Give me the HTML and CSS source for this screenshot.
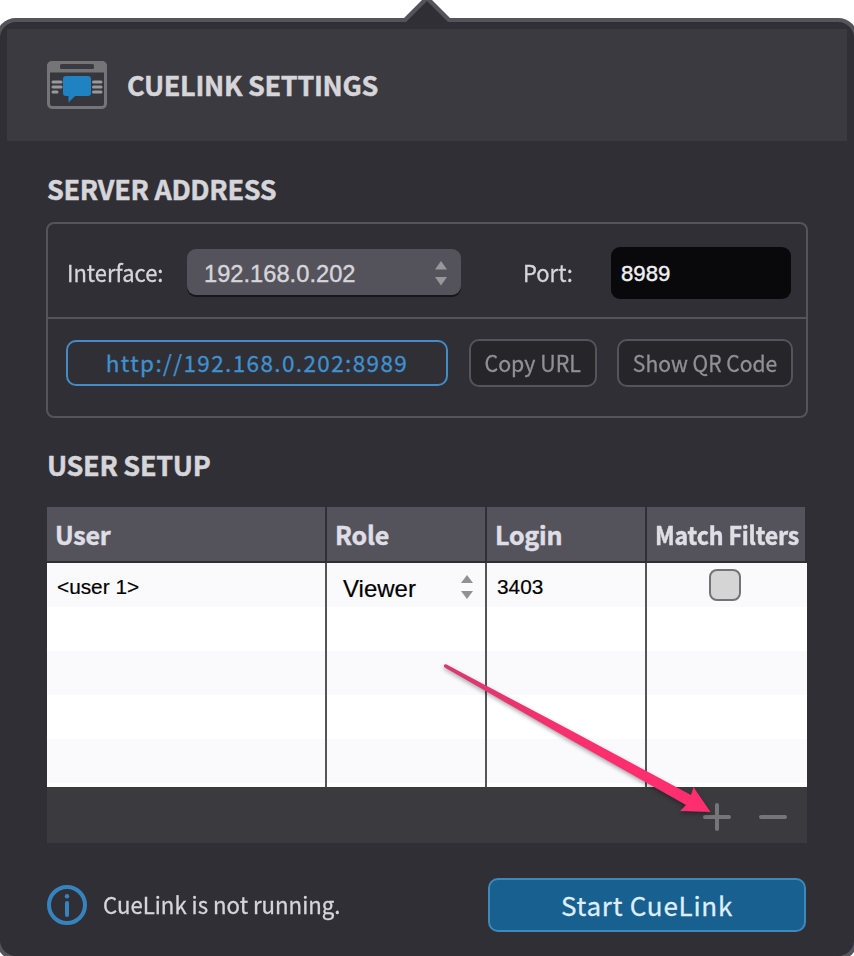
FILE: index.html
```html
<!DOCTYPE html>
<html lang="en">
<head>
<meta charset="utf-8">
<title>CueLink Settings</title>
<link rel="stylesheet" href="styles.css">
</head>
<body>
<main class="popover">
  <svg class="beak" width="50" height="24" viewBox="0 0 50 24"><path d="M2 18 25-5 48 18V22H2Z" fill="#55545c"/><path d="M3.500 22.500 25 1 46.500 22.500V24H3.500Z" fill="#302f35"/></svg>
  <header class="header">
    <svg class="logo" width="60" height="48" viewBox="0 0 60 48">
      <rect x="1.500" y="1.500" width="57" height="45" rx="4" fill="#37363c" stroke="#757477" stroke-width="3"/>
      <path d="M0 11.500V5a5 5 0 0 1 5-5H55a5 5 0 0 1 5 5V11.500Z" fill="#757477"/>
      <rect x="13" y="3" width="34" height="5" rx="1.500" fill="#3b3a40"/>
      <path d="M6 21H14M6 26H14M6 31H10M46.500 21H54M46.500 26H54M46.500 31H54" stroke="#99989b" stroke-width="3" stroke-linecap="round"/>
      <path d="M19 15H41a3 3 0 0 1 3 3V32a3 3 0 0 1-3 3H28L21.500 41.500V35H19a3 3 0 0 1-3-3V18a3 3 0 0 1 3-3Z" fill="#1f83c3"/>
    </svg>
    <h1>CUELINK SETTINGS</h1>
  </header>
  <section class="server">
    <h2>SERVER ADDRESS</h2>
    <div class="panel">
      <div class="row row-top">
        <span class="label interface">Interface:</span>
        <div class="select"><span>192.168.0.202</span><svg width="12" height="25" viewBox="0 0 12 25"><path d="M0 8.500 6 0 12 8.500ZM0 16 6 24.500 12 16Z" fill="#98979a"/></svg></div>
        <span class="label port">Port:</span>
        <div class="input">8989</div>
      </div>
      <div class="row row-bottom">
        <div class="url"><span>http://192.168.0.202:8989</span></div>
        <div class="button copy"><span>Copy URL</span></div>
        <div class="button qr"><span>Show QR Code</span></div>
      </div>
    </div>
  </section>
  <section class="users">
    <h2>USER SETUP</h2>
    <div class="table">
      <div class="cells head"><div>User</div><div>Role</div><div>Login</div><div class="match"><span>Match Filters</span></div></div>
      <div class="cells body">
        <div class="name">&lt;user 1&gt;</div>
        <div class="role"><span>Viewer</span><svg width="12" height="25" viewBox="0 0 12 25"><path d="M0 8 6 0 12 8ZM0 16 6 24 12 16Z" fill="#919093"/></svg></div>
        <div class="login">3403</div>
        <div class="check"><span class="box"></span></div>
      </div>
      <div class="foot">
        <svg width="28" height="28" viewBox="0 0 28 28"><path d="M2 14H26M14 2V26" stroke="#767578" stroke-width="4" stroke-linecap="round"/></svg>
        <svg width="28" height="28" viewBox="0 0 28 28"><path d="M2 14H26" stroke="#767578" stroke-width="4" stroke-linecap="round"/></svg>
      </div>
    </div>
  </section>
  <footer class="footer">
    <svg width="40" height="40" viewBox="0 0 40 40"><circle cx="20" cy="20" r="18" fill="none" stroke="#3584bf" stroke-width="4"/><circle cx="20" cy="11.200" r="2.200" fill="#3584bf"/><path d="M20 18V30" stroke="#3584bf" stroke-width="4" stroke-linecap="round"/></svg>
    <span class="status">CueLink is not running.</span>
    <div class="start"><span>Start CueLink</span></div>
  </footer>
</main>
<svg class="pointer" width="284" height="164" viewBox="440 656 284 164">
  <defs><linearGradient id="shaft" x1="0" x2="1" y1="0" y2="0"><stop offset="0" stop-color="#d63a6d"/><stop offset=".4" stop-color="#f4316e"/><stop offset=".7" stop-color="#ff2e6e"/></linearGradient></defs>
  <path d="M444.500 664.500C443.300 666 444 667.300 445.500 668L570 739.500 686 805 680 811 710.500 812 693.500 787 691 795 570 730 446.500 664.500Q445.500 664 444.500 664.500Z" fill="url(#shaft)"/>
</svg>
</body>
</html>
```

FILE: styles.css
```css
* { box-sizing: border-box; }
body {
  margin: 0;
  width: 854px;
  height: 956px;
  overflow: hidden;
  position: relative;
  display: flow-root;
  background: #fff;
  font-family: "Noto Sans CJK SC", "Noto Sans", sans-serif;
  color: #d6d5da;
}
svg { display: block; flex: none; overflow: visible; }
h1, h2 {
  margin: 0;
  font-size: 27px;
  line-height: 40px;
  font-weight: 700;
  letter-spacing: -0.3px;
  white-space: nowrap;
  -webkit-text-stroke: 0.5px;
}
.popover {
  position: relative;
  width: 862px;
  height: 942px;
  margin: 18px 0 0 -4px;
  padding: 7px;
  border: 4px solid #55545c;
  border-radius: 20px;
  background: #302f35;
}
.beak { position: absolute; left: 402px; top: -22px; }
.header {
  height: 112px;
  padding: 0 40px;
  display: flex;
  align-items: center;
  gap: 20px;
  background: #3b3a40;
}
.server, .users, .footer { margin-left: 40px; }
.server { padding-top: 28px; margin-left: 39px; }
.server h2 { padding-left: 1px; }
.panel {
  width: 762px;
  height: 196px;
  margin-top: 13px;
  border: 2px solid #55545c;
  border-radius: 8px;
}
.row { display: flex; align-items: center; }
.row-top { height: 95px; padding: 5px 15px 0 19px; border-bottom: 2px solid #55545c; }
.row-bottom { height: 88px; padding-left: 18px; }
.label {
  padding-bottom: 3px;
  font-size: 23px;
  line-height: 36px;
  white-space: nowrap;
  transform: scaleX(0.955);
  transform-origin: left;
  -webkit-text-stroke: 0.3px;
}
.interface { width: 120px; }
.port { width: 88px; margin-left: 62px; }
.select {
  width: 274px;
  height: 46px;
  margin-top: -2px;
  padding: 4px 14px 0 17px;
  display: flex;
  align-items: center;
  justify-content: space-between;
  border-radius: 9px;
  background: #54535c;
  box-shadow: 0 2px 0 #17161b;
  font: 23.7px/36px "Liberation Sans", Arial, sans-serif;
  -webkit-text-stroke: 0.4px;
}
.select svg { margin-top: -2px; }
.input {
  width: 180px;
  height: 52px;
  padding: 2px 10px 0;
  border-radius: 9px;
  background: #09090b;
  color: #f0f0f2;
  font: 22.200px/50px "Liberation Sans", Arial, sans-serif;
  -webkit-text-stroke: 0.4px;
}
.url, .button {
  display: flex;
  align-items: center;
  justify-content: center;
  padding-bottom: 3px;
  white-space: nowrap;
  font-size: 22.500px;
  border-radius: 10px;
  -webkit-text-stroke: 0.3px;
}
.url {
  width: 382px;
  height: 46px;
  border: 2px solid #438cc5;
  color: #3f91d0;
  letter-spacing: 1.38px;
}
.button {
  height: 48px;
  border: 2px solid #55545a;
  background: #26252a;
  color: #919094;
}
.copy { width: 128px; margin-left: 21px; }
.copy span { transform: scaleX(0.95); }
.qr { width: 176px; margin-left: 20px; }
.qr span { transform: scaleX(0.937); }
.users { padding-top: 27px; }
.table { width: 760px; margin-top: 22px; }
.cells { display: grid; grid-template-columns: 278px 158px 158px 160px; column-gap: 2px; }
.head { height: 56px; padding-bottom: 2px; }
.head > div {
  padding: 0 0 0 8px;
  line-height: 54px;
  white-space: nowrap;
  font-size: 25px;
  font-weight: 700;
  letter-spacing: -0.2px;
  background: #54535c;
  color: #dfdee4;
  -webkit-text-stroke: 0.5px;
}
.head .match { margin-right: 2px; }
.match span { display: inline-block; transform: scaleX(0.925); transform-origin: left; }
.body {
  height: 224px;
  background: #55545a;
  color: #000;
  font-family: "Liberation Sans", Arial, sans-serif;
}
.body > div { height: 224px; background: repeating-linear-gradient(#fafafd 0 44px, #fff 44px 88px); }
.name, .login { padding-left: 10px; font-size: 20.800px; line-height: 48px; -webkit-text-stroke: 0.2px; }
.role {
  display: flex;
  align-items: flex-start;
  justify-content: space-between;
  padding: 0 12px 0 16px;
  font-size: 24px;
  line-height: 52px;
  -webkit-text-stroke: 0.2px;
}
.role svg { margin-top: 12px; }
.check { padding: 6px 0 0 62px; }
.box {
  display: block;
  width: 32px;
  height: 32px;
  border: 2px solid #747476;
  border-radius: 8px;
  background: #d5d5d6;
}
.foot {
  height: 56px;
  padding: 3px 20px 0 0;
  display: flex;
  align-items: center;
  justify-content: flex-end;
  gap: 28px;
  background: #3b3a3f;
}
.footer { display: flex; align-items: center; width: 759px; height: 54px; margin-top: 35px; }
.status {
  margin-left: 16px;
  padding-bottom: 2px;
  font-size: 23px;
  line-height: 36px;
  white-space: nowrap;
  transform: scaleX(0.965);
  transform-origin: left;
  -webkit-text-stroke: 0.3px;
}
.start {
  width: 318px;
  height: 54px;
  margin-left: auto;
  padding-bottom: 2px;
  display: flex;
  align-items: center;
  justify-content: center;
  border: 2px solid #3e89bb;
  border-radius: 10px;
  background: #17608f;
  color: #dfeefa;
  font-size: 26px;
  letter-spacing: 0.75px;
  -webkit-text-stroke: 0.3px;
}
.pointer {
  position: absolute;
  left: 440px;
  top: 656px;
  filter: drop-shadow(0 2px 2px rgba(0, 0, 0, 0.35));
}
```
